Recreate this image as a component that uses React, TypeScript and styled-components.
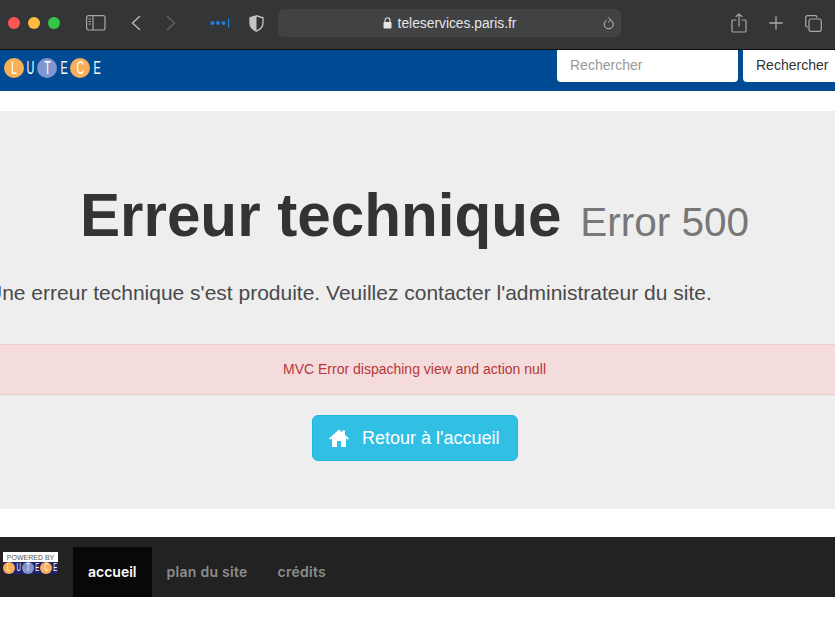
import styled, { createGlobalStyle } from "styled-components";

const GlobalStyle = createGlobalStyle`
  html, body {
    margin: 0;
    padding: 0;
    background: #fff;
    overflow: hidden;
    font-family: "Liberation Sans", Arial, sans-serif;
  }
`;

const Page = styled.div`
  width: 835px;
  height: 641px;
  overflow: hidden;
`;

// browser chrome
const Toolbar = styled.div`
  height: 50px;
  box-sizing: border-box;
  padding-bottom: 3px;
  background: #343537;
  border-bottom: 1px solid #0c0c0c;
  display: flex;
  align-items: center;
`;

const Lights = styled.div`
  display: flex;
  gap: 8px;
  margin-left: 8px;
`;

const Light = styled.span<{ $color: string }>`
  width: 12px;
  height: 12px;
  border-radius: 50%;
  background: ${(p) => p.$color};
`;

const ToolIcon = styled.svg<{ $left: number }>`
  flex: none;
  margin-left: ${(p) => p.$left}px;
  display: block;
`;

const UrlBar = styled.div`
  width: 343px;
  height: 28px;
  margin-left: 14px;
  flex: none;
  background: #414244;
  border-radius: 6px;
  display: flex;
  align-items: center;
  justify-content: center;
  gap: 6px;
  position: relative;
  color: #e6e6e6;
  font-size: 13.8px;
  font-weight: 500;
`;

const Reload = styled.svg`
  position: absolute;
  right: 6px;
  top: 8px;
`;

// blue header
const Header = styled.header`
  height: 41px;
  background: #004b93;
  display: flex;
  justify-content: space-between;
  align-items: flex-start;
`;

const Logo = styled.div`
  display: flex;
  align-items: center;
  margin: 8px 0 0 4px;
  gap: 3px;
`;

const LogoLetter = styled.span<{ $circle?: string }>`
  width: ${(p) => (p.$circle ? "20px" : "7px")};
  height: 20px;
  flex: none;
  border-radius: 50%;
  background: ${(p) => p.$circle || "transparent"};
  color: #fff;
  font-size: 18px;
  line-height: 20px;
  display: flex;
  justify-content: center;
  span {
    flex: none;
    transform: scaleX(0.6);
  }
`;

const SearchForm = styled.div`
  display: flex;
  gap: 5px;
  width: 278px;
  flex: none;
`;

const SearchInput = styled.div`
  width: 181px;
  height: 32px;
  flex: none;
  box-sizing: border-box;
  background: #fff;
  border-radius: 0 0 4px 4px;
  padding-left: 13px;
  color: #999;
  font-size: 14px;
  line-height: 31px;
`;

const SearchButton = styled.div`
  width: 100px;
  height: 32px;
  box-sizing: border-box;
  flex: none;
  background: #fff;
  border-radius: 0 0 4px 4px;
  padding-left: 13px;
  color: #333;
  font-size: 14px;
  line-height: 31px;
  white-space: nowrap;
`;

// error panel
const Jumbotron = styled.main`
  margin-top: 20px;
  height: 398px;
  background: #eeeeee;
  overflow: hidden;
`;

const Title = styled.h1`
  margin: 65px 6px 0 0;
  text-align: center;
  font-size: 60.2px;
  line-height: 80px;
  font-weight: 700;
  color: #333;
  small {
    font-size: 40.5px;
    font-weight: 400;
    color: #777;
    margin-left: 2px;
  }
`;

const Lead = styled.p`
  margin: 16px 0 0 -13px;
  font-size: 21px;
  line-height: 30px;
  color: #4a4a4a;
  white-space: nowrap;
`;

const Alert = styled.div`
  margin-top: 36px;
  height: 51px;
  box-sizing: border-box;
  padding-right: 6px;
  background: #f5dcdc;
  border-top: 1px solid #ebcccc;
  border-bottom: 1px solid #ebcccc;
  color: #b5373a;
  font-size: 14px;
  line-height: 49px;
  text-align: center;
`;

const ButtonRow = styled.div`
  display: flex;
  justify-content: center;
  margin-top: 20px;
  padding-right: 5px;
`;

const HomeButton = styled.div`
  width: 206px;
  height: 46px;
  box-sizing: border-box;
  background: #31c0e4;
  border: 1px solid #1cb7dd;
  border-radius: 6px;
  color: #fff;
  font-size: 18px;
  display: flex;
  align-items: center;
  padding-left: 16px;
  gap: 13px;
`;

// footer
const Footer = styled.footer`
  margin-top: 28px;
  height: 60px;
  background: #222222;
  display: flex;
  align-items: stretch;
`;

const Powered = styled.div`
  width: 55px;
  height: 22px;
  margin: 15px 15px 0 3px;
  flex: none;
`;

const PoweredText = styled.div`
  height: 10px;
  background: #fff;
  color: #555;
  font-size: 7px;
  line-height: 11px;
  text-align: center;
  white-space: nowrap;
`;

const PoweredLogo = styled.div`
  height: 12px;
  background: #1e2470;
  display: flex;
  justify-content: space-between;
  align-items: center;
`;

const PoweredLetter = styled.span<{ $circle?: string }>`
  width: ${(p) => (p.$circle ? "12px" : "5px")};
  height: 12px;
  flex: none;
  border-radius: 50%;
  background: ${(p) => p.$circle || "transparent"};
  color: #fff;
  font-size: 10px;
  line-height: 12px;
  display: flex;
  justify-content: center;
  span {
    flex: none;
    transform: scaleX(0.6);
  }
`;

const NavItem = styled.div<{ $active?: boolean }>`
  height: 50px;
  margin-top: 10px;
  padding: 0 15px;
  background: ${(p) => (p.$active ? "#080808" : "transparent")};
  color: ${(p) => (p.$active ? "#fff" : "#8c8c8c")};
  font-family: Inter, "Open Sans", sans-serif;
  font-size: 14px;
  font-weight: 600;
  letter-spacing: ${(p) => (p.$active ? "0" : "0.27px")};
  line-height: 50px;
`;

const ORANGE = "#f9ae58";
const BLUE = "#7f96cf";

const logoLetters: [string, string?][] = [
  ["L", ORANGE],
  ["U"],
  ["T", BLUE],
  ["E"],
  ["C", ORANGE],
  ["E"],
];

export default function App() {
  return (
    <Page>
      <GlobalStyle />
      <Toolbar>
        <Lights>
          <Light $color="#fc5753" />
          <Light $color="#fdbc40" />
          <Light $color="#33c748" />
        </Lights>
        <ToolIcon $left={26} width="20" height="16" viewBox="0 0 20 16" fill="none" stroke="#a8a8a8" strokeWidth="1.2">
          <rect x="0.6" y="0.6" width="18.4" height="14.4" rx="2" />
          <path d="M7 0.6v14.4" />
          <path d="M2.5 4h2.5M2.500 6.500h2.500M2.500 9h2.500" />
        </ToolIcon>
        <ToolIcon $left={25} width="10" height="16" viewBox="0 0 10 16" fill="none" stroke="#b4b4b4" strokeWidth="1.6" strokeLinecap="round" strokeLinejoin="round">
          <path d="M8.500 1.500 1.500 8l7 6.500" />
        </ToolIcon>
        <ToolIcon $left={25} width="10" height="16" viewBox="0 0 10 16" fill="none" stroke="#5e5f61" strokeWidth="1.6" strokeLinecap="round" strokeLinejoin="round">
          <path d="M1.500 1.500 8.500 8l-7 6.500" />
        </ToolIcon>
        <ToolIcon $left={34} width="20" height="10" viewBox="0 0 20 10" fill="#1d7fdc">
          <circle cx="2.500" cy="5" r="2" />
          <circle cx="8" cy="5" r="2" />
          <circle cx="13.500" cy="5" r="2" />
          <rect x="18" y="0.500" width="1.200" height="9" />
        </ToolIcon>
        <ToolIcon $left={19} width="15" height="17" viewBox="0 0 15 17">
          <path d="M7.500 0.800 1 2.800v5c0 4 3 6.900 6.500 8.400C11 14.700 14 11.800 14 7.800v-5z" fill="none" stroke="#c4c4c4" strokeWidth="1.300" />
          <path d="M7.500 0.800 1 2.800v5c0 4 3 6.900 6.500 8.400z" fill="#c4c4c4" />
        </ToolIcon>
        <UrlBar>
          <svg width="9" height="12" viewBox="0 0 9 12">
            <path d="M2 5V3.300a2.500 2.500 0 0 1 5 0V5" fill="none" stroke="#e6e6e6" strokeWidth="1.100" />
            <rect x="0.500" y="5" width="8" height="6.500" rx="1" fill="#e6e6e6" />
          </svg>
          teleservices.paris.fr
          <Reload width="12" height="13" viewBox="0 0 12 13" fill="none" stroke="#bdbdbd" strokeWidth="1" strokeLinecap="round">
            <path d="M7.500 3a4.600 4.600 0 1 1-4.200 0.300" />
            <path d="M5.500 0.700 7.700 3 5.500 5" />
          </Reload>
        </UrlBar>
        <ToolIcon $left={110} width="16" height="20" viewBox="0 0 16 20" fill="none" stroke="#a8a8a8" strokeWidth="1.200" strokeLinecap="round">
          <path d="M5 7H2a1 1 0 0 0-1 1v10a1 1 0 0 0 1 1h12a1 1 0 0 0 1-1V8a1 1 0 0 0-1-1h-3" />
          <path d="M8 13V1M5 3.500 8 1l3 2.500" />
        </ToolIcon>
        <ToolIcon $left={22} width="14" height="14" viewBox="0 0 14 14" fill="none" stroke="#a8a8a8" strokeWidth="1.300" strokeLinecap="round">
          <path d="M7 0.700v12.600M0.700 7h12.600" />
        </ToolIcon>
        <ToolIcon $left={22} width="17" height="17" viewBox="0 0 17 17" fill="none" stroke="#a8a8a8" strokeWidth="1.200">
          <path d="M3 12H2.500A1.800 1.800 0 0 1 0.700 10.200V2.500A1.800 1.800 0 0 1 2.500 0.700h7.700A1.800 1.800 0 0 1 12 2.500V3" />
          <rect x="4" y="4" width="12.300" height="12.300" rx="2" />
        </ToolIcon>
      </Toolbar>

      <Header>
        <Logo>
          {logoLetters.map(([ch, circle], i) => (
            <LogoLetter key={i} $circle={circle}>
              <span>{ch}</span>
            </LogoLetter>
          ))}
        </Logo>
        <SearchForm>
          <SearchInput>Rechercher</SearchInput>
          <SearchButton>Rechercher</SearchButton>
        </SearchForm>
      </Header>

      <Jumbotron>
        <Title>
          Erreur technique <small>Error 500</small>
        </Title>
        <Lead>Une erreur technique s'est produite. Veuillez contacter l'administrateur du site.</Lead>
        <Alert>MVC Error dispaching view and action null</Alert>
        <ButtonRow>
          <HomeButton>
            <svg width="20" height="18" viewBox="0 0 20 18" fill="#fff">
              <path d="M10 0.500 0 9.500l1.200 1.300L3 9.200V18h5v-6h4v6h5V9.200l1.800 1.600L20 9.500l-4-3.600V1.500h-2.500v2.200z" />
            </svg>
            Retour à l'accueil
          </HomeButton>
        </ButtonRow>
      </Jumbotron>

      <Footer>
        <Powered>
          <PoweredText>POWERED BY</PoweredText>
          <PoweredLogo>
            {logoLetters.map(([ch, circle], i) => (
              <PoweredLetter key={i} $circle={circle}>
                <span>{ch}</span>
              </PoweredLetter>
            ))}
          </PoweredLogo>
        </Powered>
        <NavItem $active>accueil</NavItem>
        <NavItem>plan du site</NavItem>
        <NavItem>crédits</NavItem>
      </Footer>
    </Page>
  );
}
